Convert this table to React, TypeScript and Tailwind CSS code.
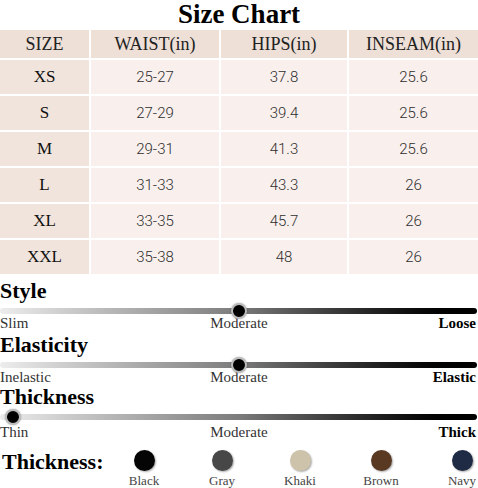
import React from 'react';

const serif = "font-['Liberation_Serif','Times_New_Roman',serif]";

const ROWS = [
  ['XS', '25-27', '37.8', '25.6'],
  ['S', '27-29', '39.4', '25.6'],
  ['M', '29-31', '41.3', '25.6'],
  ['L', '31-33', '43.3', '26'],
  ['XL', '33-35', '45.7', '26'],
  ['XXL', '35-38', '48', '26'],
];

const HEADERS = ['SIZE', 'WAIST(in)', 'HIPS(in)', 'INSEAM(in)'];

const COLORS = [
  { name: 'Black', bg: 'bg-[#050505]', ml: 'ml-0' },
  { name: 'Gray', bg: 'bg-[#474747]', ml: 'ml-[46px]' },
  { name: 'Khaki', bg: 'bg-[#cdc2aa]', ml: 'ml-[46px]' },
  { name: 'Brown', bg: 'bg-[#5a3922]', ml: 'ml-[49px]' },
  { name: 'Navy', bg: 'bg-[#1f2a44]', ml: 'ml-[49px]' },
];

interface ScaleProps {
  title: string;
  knob: string;
  left: string;
  right: string;
  className: string;
  labelsClass: string;
}

const Scale: React.FC<ScaleProps> = ({ title, knob, left, right, className, labelsClass }) => {
  return (
    <div className={className}>
      <div className={`${serif} text-[22px] leading-[22px] font-bold text-black`}>{title}</div>
      <div className="relative mt-[3px] h-[12px] flex items-center">
        <div className="h-[6px] w-[477px] rounded-full bg-linear-to-r from-[#ededed] via-[#7c7c7c] to-black"></div>
        <div
          className={`absolute top-1/2 -translate-y-1/2 ${knob} w-[16px] h-[16px] rounded-full bg-black border-2 border-[#bcbcbc] shadow-[0_0_2px_rgba(0,0,0,0.3)]`}
        ></div>
      </div>
      <div className={`${labelsClass} grid grid-cols-3 ${serif} text-[15px] leading-[16px] text-[#333]`}>
        <span className="text-left">{left}</span>
        <span className="text-center">Moderate</span>
        <span className="text-right pr-[2px] font-bold text-black">{right}</span>
      </div>
    </div>
  );
};

const App: React.FC = () => {
  return (
    <div className="w-[478px] h-[488px] bg-white overflow-hidden flex flex-col">
      <h1 className={`${serif} h-[30px] text-[27px] leading-[28px] font-bold text-black text-center`}>
        Size Chart
      </h1>

      {/* table */}
      <div className="grid grid-cols-[89px_128px_126px_129px] gap-[2px] bg-white">
        {HEADERS.map((h) => (
          <div
            key={h}
            className={`h-[28px] bg-[#eee0d7] flex items-center justify-center ${serif} text-[18px] text-[#222]`}
          >
            {h}
          </div>
        ))}
        {ROWS.map((row) =>
          row.map((cell, i) =>
            i === 0 ? (
              <div
                key={row[0] + i}
                className={`h-[34px] bg-[#f1e4dc] flex items-center justify-center ${serif} text-[17px] text-[#111]`}
              >
                {cell}
              </div>
            ) : (
              <div
                key={row[0] + i}
                className="h-[34px] bg-[#f9f0ed] flex items-center justify-center font-['Roboto',sans-serif] font-light text-[15px] text-[#2e2e2e]"
              >
                {cell}
              </div>
            )
          )
        )}
      </div>

      <Scale title="Style" knob="left-[231px]" left="Slim" right="Loose" className="mt-[6px]" labelsClass="-mt-[2px]" />
      <Scale
        title="Elasticity"
        knob="left-[231px]"
        left="Inelastic"
        right="Elastic"
        className="mt-[3px]"
        labelsClass="-mt-[2px]"
      />
      <Scale title="Thickness" knob="left-[5px]" left="Thin" right="Thick" className="mt-[1px]" labelsClass="mt-[1px]" />

      {/* colours */}
      <div className="mt-[10px] flex items-start">
        <div className={`${serif} w-[128px] pl-[2px] text-[22px] leading-[22px] font-bold text-black mt-[1px]`}>
          Thickness:
        </div>
        {COLORS.map((c) => (
          <div key={c.name} className={`${c.ml} w-[32px] flex flex-col items-center`}>
            <div className={`w-[21px] h-[21px] rounded-full ${c.bg} shadow-[1px_1px_2px_rgba(0,0,0,0.35)]`}></div>
            <span className={`mt-[2px] whitespace-nowrap ${serif} text-[13px] leading-[15px] text-[#444]`}>{c.name}</span>
          </div>
        ))}
      </div>
    </div>
  );
};

export default App;
